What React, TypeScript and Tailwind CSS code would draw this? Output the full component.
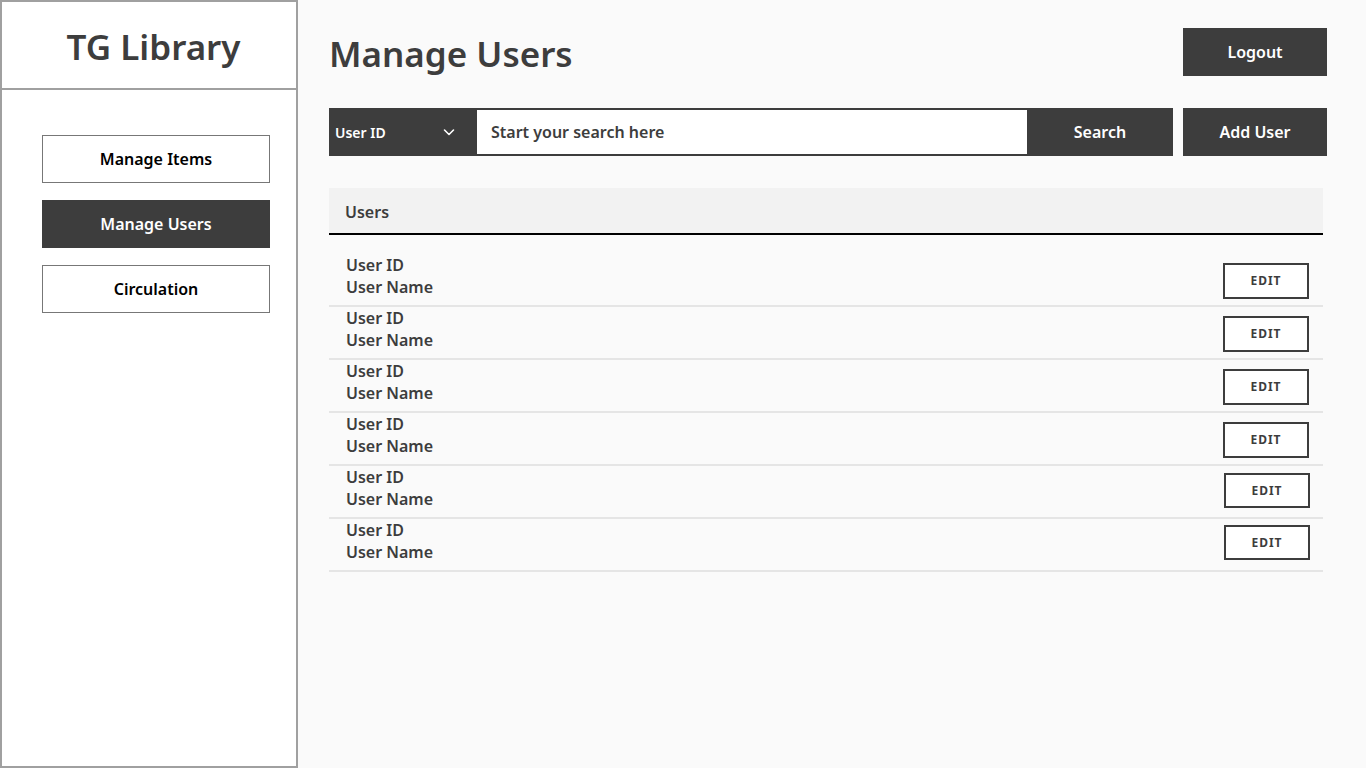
import React from "react";

const users = Array.from({ length: 6 }, (_, i) => i);

export default function App() {
  return (
    <div className="flex w-[1366px] h-[768px] bg-[#fafafa] text-[#3d3d3d]" style={{ fontFamily: '"Noto Sans", sans-serif' }}>
      <aside className="w-[298px] h-[768px] border-2 border-[#a0a0a0] bg-white flex flex-col shrink-0">
        <div className="h-[88px] border-b-2 border-[#a0a0a0] flex items-center justify-center pl-[9px]">
          <h1 className="text-[35px] font-semibold text-[#3d3d3d] leading-none pt-[2px]">TG Library</h1>
        </div>
        <nav className="flex flex-col gap-[17px] pt-[45px] pl-[40px]">
          <button className="w-[228px] h-[48px] border border-[#777] bg-white text-black text-[16px] font-semibold">Manage Items</button>
          <button className="w-[228px] h-[48px] bg-[#3d3d3d] text-white text-[16px] font-semibold">Manage Users</button>
          <button className="w-[228px] h-[48px] border border-[#777] bg-white text-black text-[16px] font-semibold">Circulation</button>
        </nav>
      </aside>
      <main className="flex-1 pl-[31px] pr-[39px] pt-[28px]">
        <div className="flex justify-between items-start">
          <h2 className="h-[48px] flex items-center text-[35px] font-semibold text-[#3d3d3d] leading-none pt-[2px]">Manage Users</h2>
          <button className="w-[144px] h-[48px] bg-[#3d3d3d] text-white text-[16px] font-semibold">Logout</button>
        </div>
        <div className="flex mt-[32px] h-[48px]">
          <div className="w-[148px] h-[48px] bg-[#3d3d3d] text-white flex items-center justify-between pl-[6px] pr-[21px]">
            <span className="text-[14px] font-semibold">User ID</span>
            <svg width="14" height="14" viewBox="0 0 14 14" fill="none" stroke="white" strokeWidth="1.6" strokeLinecap="round" strokeLinejoin="round">
              <path d="M2.5 5 L7 9.5 L11.5 5" />
            </svg>
          </div>
          <div className="flex-1 h-[48px] bg-white border-y-2 border-[#3d3d3d] flex items-center pl-[14px]">
            <span className="text-[16px] font-semibold text-[#3d3d3d]">Start your search here</span>
          </div>
          <button className="w-[146px] h-[48px] bg-[#3d3d3d] text-white text-[16px] font-semibold">Search</button>
          <button className="ml-[10px] w-[144px] h-[48px] bg-[#3d3d3d] text-white text-[16px] font-semibold">Add User</button>
        </div>
        <div className="mt-[32px] mr-[4px]">
          <div className="h-[45px] bg-[#f2f2f2] flex items-center pl-[16px] pt-[2px]">
            <span className="text-[16px] font-semibold text-[#3d3d3d]">Users</span>
          </div>
          <div className="border-t-2 border-black pt-[19px]">
            {users.map((i) => (
              <div key={i} className="h-[53px] flex justify-between items-start border-b-2 border-[#e5e5e5] pl-[17px] pr-[14px]">
                <div className="flex flex-col text-[16px] font-semibold leading-[22px] text-[#3d3d3d]">
                  <span>User ID</span>
                  <span>User Name</span>
                </div>
                <button
                  className={`w-[86px] border-2 border-[#3d3d3d] bg-white text-[12px] font-bold tracking-[1px] text-[#3d3d3d] ${
                    i === 4 ? "-mr-[1px] mt-[7px] h-[35px]" : i === 5 ? "-mr-[1px] mt-[6px] h-[35px]" : "mt-[9px] h-[36px]"
                  }`}
                >
                  EDIT
                </button>
              </div>
            ))}
          </div>
        </div>
      </main>
    </div>
  );
}
